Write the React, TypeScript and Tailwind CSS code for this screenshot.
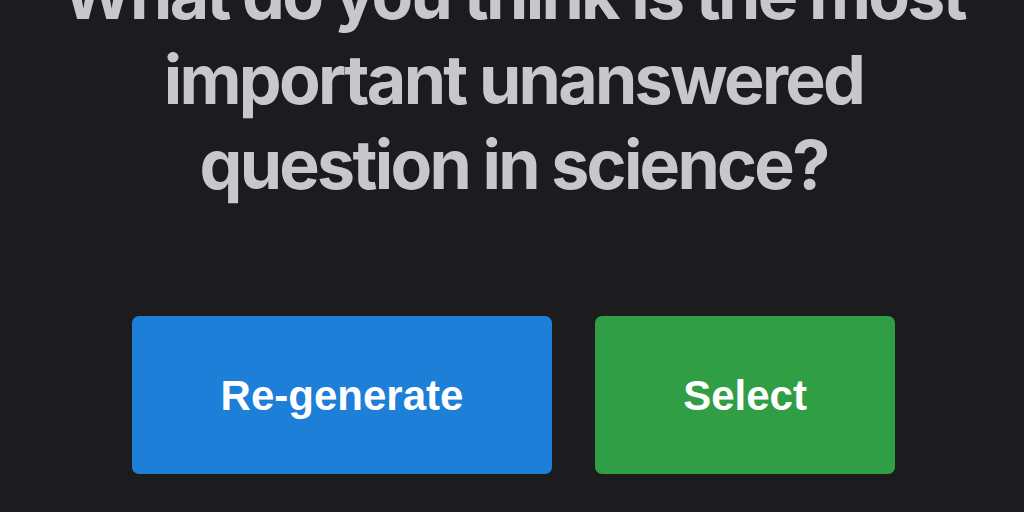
import React from "react";

export default function App() {
  return (
    <div className="w-[1024px] h-[512px] overflow-hidden bg-[#1c1c1f] flex flex-col items-center pl-[3px]">
      <h1 className="mt-[-48px] text-center text-[#c8c8cc] font-['Inter','Noto_Sans',sans-serif] font-bold text-[68px] leading-[85px] tracking-[-2.7px] whitespace-nowrap">
        What do you think is the most
        <br />
        important unanswered
        <br />
        question in science?
      </h1>
      <div className="mt-[109px] flex gap-[43px] font-['Liberation_Sans',Arial,sans-serif]">
        <button className="w-[420px] h-[158px] rounded-[7px] bg-[#1e7fd9] text-white font-bold text-[42px]">
          Re-generate
        </button>
        <button className="w-[300px] h-[158px] rounded-[7px] bg-[#2f9e45] text-white font-bold text-[42px]">
          Select
        </button>
      </div>
    </div>
  );
}
